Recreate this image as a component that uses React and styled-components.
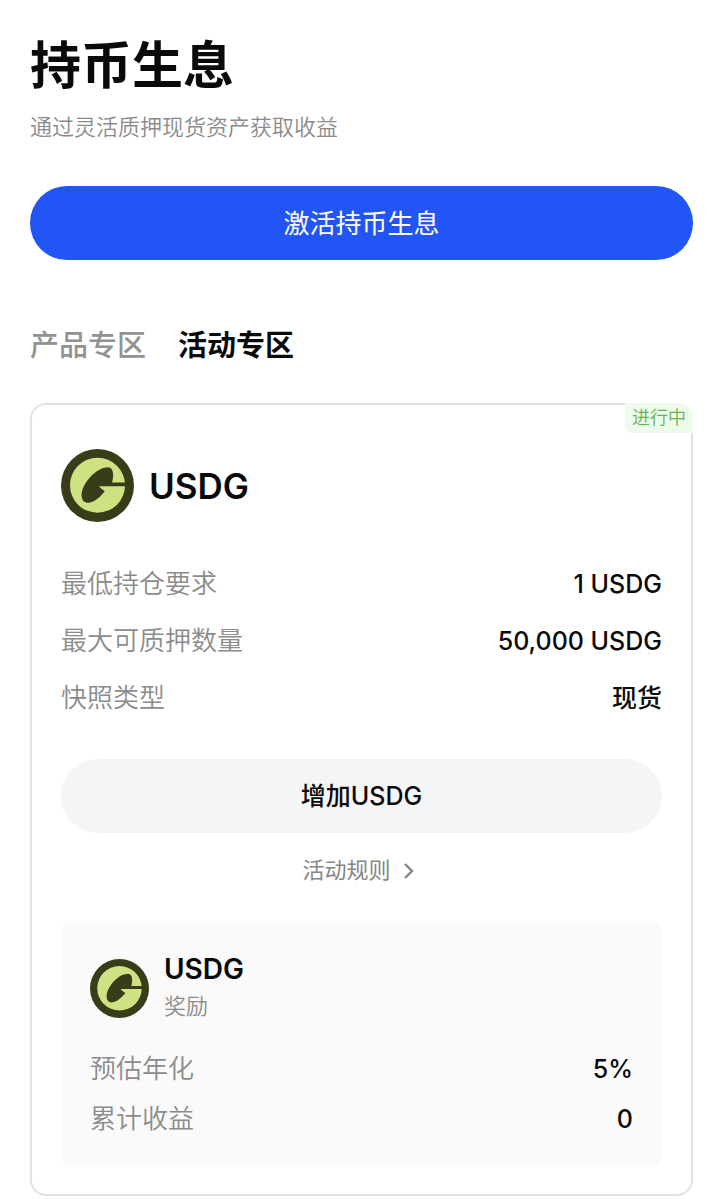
import React, { useState } from "react";
import styled, { createGlobalStyle } from "styled-components";

const GlobalStyle = createGlobalStyle`
  * {
    box-sizing: border-box;
  }

  body {
    margin: 0;
    background-color: #fff;
    color: #0a0a0a;
    font-family: Inter, "Noto Sans CJK SC", sans-serif;
  }

  h1, h2, h3, p, dl, dd {
    margin: 0;
  }

  button {
    font-family: inherit;
    border: none;
    cursor: pointer;
  }
`;

const Page = styled.main`
  padding: 36px 30px 3px;
`;

const Title = styled.h1`
  font-size: 51px;
  line-height: 60px;
  font-weight: 700;
`;

const Subtitle = styled.p`
  margin-top: 16px;
  font-size: 22px;
  line-height: 30px;
  font-weight: 350;
  color: #8b8b8b;
`;

const PillButton = styled.button`
  display: block;
  width: 100%;
  height: 74px;
  margin-top: ${(props) => (props.$primary ? "44px" : "43px")};
  padding: 0 0 4px;
  border-radius: 37px;
  font-size: ${(props) => (props.$primary ? "26px" : "25px")};
  font-weight: ${(props) => (props.$primary ? 400 : 500)};
  color: ${(props) => (props.$primary ? "#fff" : "#0a0a0a")};
  background-color: ${(props) => (props.$primary ? "#2255f5" : "#f4f5f7")};
`;

const Tabs = styled.div`
  display: flex;
  gap: 32px;
  margin-top: 66px;
`;

const Tab = styled.button`
  padding: 0;
  background: none;
  font-size: 29px;
  line-height: 40px;
  font-weight: ${(props) => (props.$active ? 700 : 500)};
  color: ${(props) => (props.$active ? "#0a0a0a" : "#929292")};
`;

const Card = styled.section`
  position: relative;
  margin-top: 37px;
  padding: 44px 29px 29px;
  border: 2px solid #e2e2e2;
  border-radius: 16px;
`;

const Status = styled.span`
  position: absolute;
  top: -2px;
  right: -2px;
  padding: 0 7px;
  border-radius: 0 16px 0 8px;
  background-color: #ecfbea;
  font-size: 18px;
  line-height: 30px;
  font-weight: 350;
  color: #6bb257;
`;

const CoinHeader = styled.header`
  display: flex;
  align-items: center;
  gap: 15px;
`;

const CoinName = styled.h2`
  font-size: 35px;
  line-height: 44px;
  font-weight: 600;
`;

const Rows = styled.dl`
  display: flex;
  flex-direction: column;
  gap: ${(props) => (props.$compact ? "14px" : "21px")};
  margin-top: ${(props) => (props.$compact ? "26px" : "44px")};
`;

const Row = styled.div`
  display: flex;
  justify-content: space-between;
  line-height: 36px;
`;

const Label = styled.dt`
  font-size: 26px;
  font-weight: 350;
  color: #8b8b8b;
`;

const Value = styled.dd`
  font-size: 25px;
  font-weight: 500;
`;

const RulesLink = styled.a`
  display: flex;
  align-items: center;
  justify-content: center;
  gap: 6px;
  margin-top: 22px;
  font-size: 22px;
  line-height: 30px;
  color: #858585;
  text-decoration: none;
`;

const Reward = styled.section`
  margin-top: 38px;
  padding: 28px 29px;
  border-radius: 8px;
  background-color: #fafafa;
`;

const RewardName = styled.h3`
  font-size: 28px;
  line-height: 37px;
  font-weight: 600;
`;

const RewardType = styled.p`
  font-size: 22px;
  line-height: 37px;
  font-weight: 350;
  color: #8b8b8b;
`;

const CoinLogo = ({ size }) => (
  <svg width={size} height={size} viewBox="0 0 220 220" aria-hidden="true">
    <circle cx="110" cy="110" r="110" fill="#383c18" />
    <circle cx="110" cy="109" r="83" fill="#cee284" />
    <path
      d="M62 142C60 108 104 55 142 55C159 56 160 80 154 101H197V112H114L121 119L132 127C114 150 94 163 78 162C68 161 63 154 62 142Z"
      fill="#383c18"
    />
  </svg>
);

const ChevronIcon = () => (
  <svg width="24" height="24" viewBox="0 0 24 24" fill="none" aria-hidden="true">
    <path d="M8 6L15 13L8 20" stroke="#858585" strokeWidth="2.4" />
  </svg>
);

const TABS = ["产品专区", "活动专区"];

const requirements = [
  { label: "最低持仓要求", value: "1 USDG" },
  { label: "最大可质押数量", value: "50,000 USDG" },
  { label: "快照类型", value: "现货" },
];

const rewards = [
  { label: "预估年化", value: "5%" },
  { label: "累计收益", value: "0" },
];

const DataRows = ({ items, compact }) => (
  <Rows $compact={compact}>
    {items.map((item) => (
      <Row key={item.label}>
        <Label>{item.label}</Label>
        <Value>{item.value}</Value>
      </Row>
    ))}
  </Rows>
);

const App = () => {
  const [tab, setTab] = useState("活动专区");

  return (
    <>
      <GlobalStyle />
      <Page>
        <Title>持币生息</Title>
        <Subtitle>通过灵活质押现货资产获取收益</Subtitle>
        <PillButton type="button" $primary>
          激活持币生息
        </PillButton>

        <Tabs role="tablist">
          {TABS.map((name) => (
            <Tab
              key={name}
              type="button"
              role="tab"
              aria-selected={tab === name}
              $active={tab === name}
              onClick={() => setTab(name)}
            >
              {name}
            </Tab>
          ))}
        </Tabs>

        <Card>
          <Status>进行中</Status>
          <CoinHeader>
            <CoinLogo size={73} />
            <CoinName>USDG</CoinName>
          </CoinHeader>
          <DataRows items={requirements} />
          <PillButton type="button">增加USDG</PillButton>
          <RulesLink href="#rules">
            活动规则
            <ChevronIcon />
          </RulesLink>

          <Reward>
            <CoinHeader>
              <CoinLogo size={59} />
              <div>
                <RewardName>USDG</RewardName>
                <RewardType>奖励</RewardType>
              </div>
            </CoinHeader>
            <DataRows items={rewards} compact />
          </Reward>
        </Card>
      </Page>
    </>
  );
};

export default App;
